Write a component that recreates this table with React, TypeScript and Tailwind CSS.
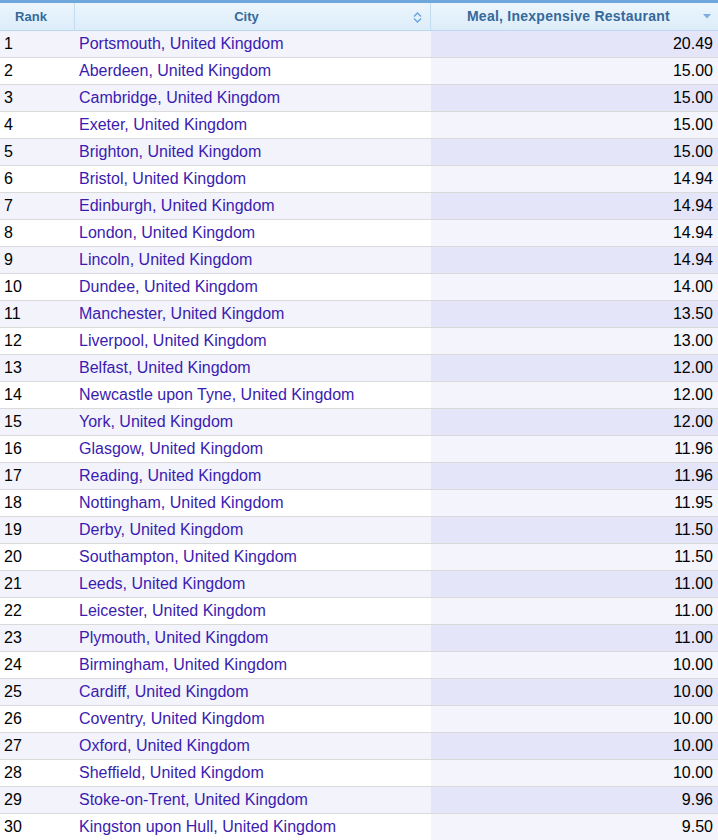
import React from "react";

const rows: [string, string][] = [
  ["Portsmouth, United Kingdom", "20.49"],
  ["Aberdeen, United Kingdom", "15.00"],
  ["Cambridge, United Kingdom", "15.00"],
  ["Exeter, United Kingdom", "15.00"],
  ["Brighton, United Kingdom", "15.00"],
  ["Bristol, United Kingdom", "14.94"],
  ["Edinburgh, United Kingdom", "14.94"],
  ["London, United Kingdom", "14.94"],
  ["Lincoln, United Kingdom", "14.94"],
  ["Dundee, United Kingdom", "14.00"],
  ["Manchester, United Kingdom", "13.50"],
  ["Liverpool, United Kingdom", "13.00"],
  ["Belfast, United Kingdom", "12.00"],
  ["Newcastle upon Tyne, United Kingdom", "12.00"],
  ["York, United Kingdom", "12.00"],
  ["Glasgow, United Kingdom", "11.96"],
  ["Reading, United Kingdom", "11.96"],
  ["Nottingham, United Kingdom", "11.95"],
  ["Derby, United Kingdom", "11.50"],
  ["Southampton, United Kingdom", "11.50"],
  ["Leeds, United Kingdom", "11.00"],
  ["Leicester, United Kingdom", "11.00"],
  ["Plymouth, United Kingdom", "11.00"],
  ["Birmingham, United Kingdom", "10.00"],
  ["Cardiff, United Kingdom", "10.00"],
  ["Coventry, United Kingdom", "10.00"],
  ["Oxford, United Kingdom", "10.00"],
  ["Sheffield, United Kingdom", "10.00"],
  ["Stoke-on-Trent, United Kingdom", "9.96"],
  ["Kingston upon Hull, United Kingdom", "9.50"],
];

export default function App() {
  return (
    <div
      className="w-[718px] bg-white"
      style={{ fontFamily: '"Liberation Sans", Arial, sans-serif' }}
    >
      <div className="grid grid-cols-[75px_356px_287px] h-[31px] border-t-[3px] border-t-[#6ea7db] border-b border-b-[#bcd8ee] bg-gradient-to-b from-[#ecf5fd] to-[#dcedf9] text-[13px] font-bold text-[#35699a]">
        <div className="flex items-center justify-center pr-[12px] border-r border-r-[#c4dcef]">
          Rank
        </div>
        <div className="relative flex items-center justify-center pr-[12px] border-r border-r-[#c4dcef]">
          City
          <svg
            className="absolute right-[8px] top-[9px]"
            width="9"
            height="11"
            viewBox="0 0 9 11"
            fill="none"
            stroke="#6aa5dc"
            strokeWidth="1.4"
          >
            <path d="M1 4.5 L4.5 1 L8 4.5" />
            <path d="M1 6.5 L4.5 10 L8 6.5" />
          </svg>
        </div>
        <div className="relative flex items-center justify-center pr-[12px] text-[14px] tracking-[0.25px]">
          Meal, Inexpensive Restaurant
          <svg
            className="absolute right-[7px] top-[11px]"
            width="8"
            height="5"
            viewBox="0 0 8 5"
          >
            <path d="M0 0 L8 0 L4 4.5 Z" fill="#7aaede" />
          </svg>
        </div>
      </div>
      {rows.map(([city, val], i) => {
        const odd = i % 2 === 0;
        return (
          <div
            key={i}
            className={`grid grid-cols-[75px_356px_287px] h-[27px] border-b border-b-[#dadada] text-[16px] leading-[26px] ${
              odd ? "bg-[#f3f3fc]" : "bg-white"
            }`}
          >
            <div className="pl-[4px] text-black">{i + 1}</div>
            <div className="pl-[4px] text-[#3a1cb0] whitespace-nowrap">{city}</div>
            <div
              className={`pr-[5px] text-right text-black ${
                odd ? "bg-[#e5e5fa]" : "bg-[#f4f4fd]"
              }`}
            >
              {val}
            </div>
          </div>
        );
      })}
    </div>
  );
}
